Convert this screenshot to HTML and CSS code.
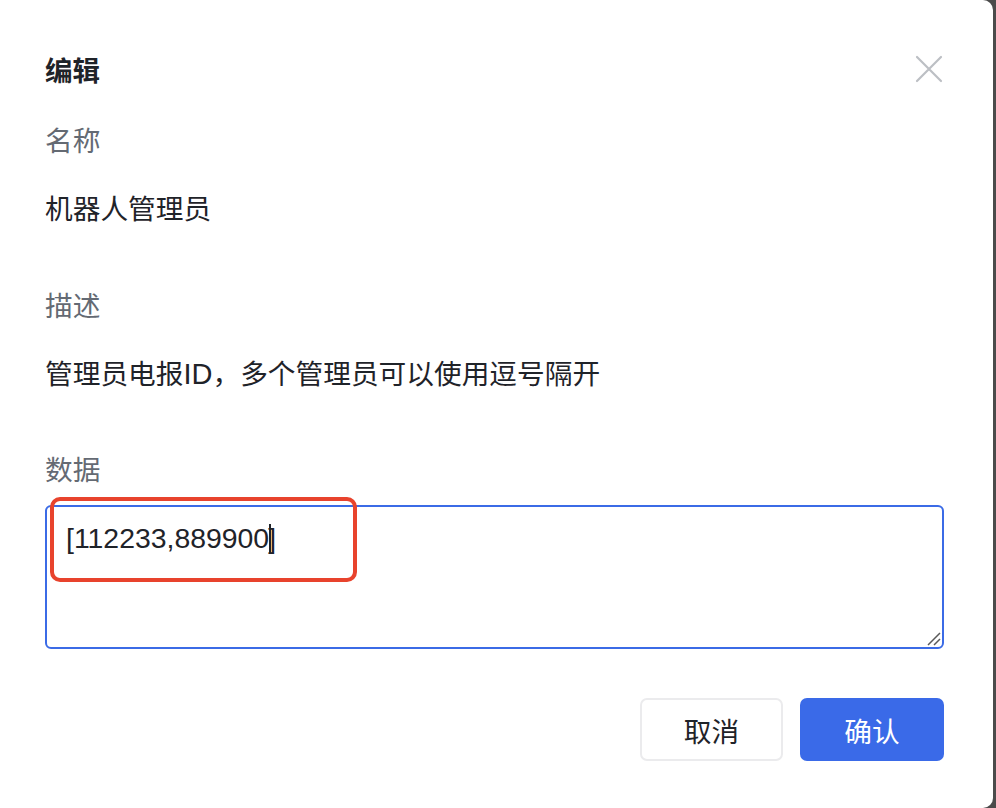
FILE: index.html
```html
<!DOCTYPE html>
<html lang="zh-CN">
<head>
<meta charset="utf-8">
<title>编辑</title>
<link rel="stylesheet" href="styles.css">
</head>
<body>
<div class="modal">
  <div class="header">
    <div class="title">编辑</div>
    <div class="close">
      <svg width="28" height="28" viewBox="0 0 28 28"><path d="M2 2 L26 26 M26 2 L2 26" stroke="#bcbfc4" stroke-width="2.2" stroke-linecap="round" fill="none"/></svg>
    </div>
  </div>
  <div class="field">
    <div class="label">名称</div>
    <div class="value">机器人管理员</div>
  </div>
  <div class="field">
    <div class="label">描述</div>
    <div class="value">管理员电报<span class="latin">ID</span>，多个管理员可以使用逗号隔开</div>
  </div>
  <div class="field last">
    <div class="label">数据</div>
    <div class="input-wrap">
      <div class="textarea"><span>[112233,889900</span><span class="caret"></span><span class="tail">]</span></div>
      <svg class="grip" width="14" height="14" viewBox="0 0 14 14"><path d="M1 13 L13 1 M7 13 L13 7" stroke="#5a5a5a" stroke-width="1.5" fill="none"/></svg>
      <div class="highlight"></div>
    </div>
  </div>
  <div class="footer">
    <button class="btn cancel">取消</button>
    <button class="btn ok">确认</button>
  </div>
</div>
</body>
</html>
```

FILE: styles.css
```css
html, body {
  margin: 0;
  padding: 0;
}
body {
  width: 996px;
  height: 808px;
  background: #4b4b4b;
  overflow: hidden;
  font-family: "Noto Sans CJK SC", sans-serif;
  font-size: 27.7px;
  color: #1f2329;
}
.modal {
  width: 993px;
  height: 808px;
  box-sizing: border-box;
  background: #fff;
  border-radius: 0 10px 10px 0;
  padding: 49px 49px 0 45px;
  display: flex;
  flex-direction: column;
}
.header {
  display: flex;
  justify-content: space-between;
  align-items: center;
  height: 40px;
}
.title {
  font-weight: 700;
  line-height: 40px;
  font-size: 27.5px;
}
.close {
  width: 28px;
  height: 28px;
  margin-right: 1px;
  display: flex;
}
.field {
  display: flex;
  flex-direction: column;
  margin-top: 30px;
}
.field + .field {
  margin-top: 57px;
}
.field.last {
  margin-top: 56px;
}
.label {
  color: #646a73;
  line-height: 40px;
  height: 40px;
}
.value {
  line-height: 40px;
  height: 40px;
  margin-top: 28px;
}
.latin {
  font-family: "Liberation Sans", sans-serif;
  font-size: 29px;
  line-height: 1;
}
.input-wrap {
  position: relative;
  margin-top: 17px;
}
.textarea {
  height: 144px;
  box-sizing: border-box;
  border: 2px solid #3b6be6;
  border-radius: 6px;
  padding: 11px 19px;
  line-height: 40px;
  display: flex;
  align-items: flex-start;
  font-family: "Liberation Sans", sans-serif;
  font-size: 28.4px;
}
.caret {
  width: 2px;
  height: 30px;
  background: #1f2329;
  margin-top: 6px;
}
.tail {
  margin-left: -3px;
}
.grip {
  position: absolute;
  right: 3px;
  bottom: 3px;
}
.highlight {
  position: absolute;
  left: 5px;
  top: -8px;
  width: 307px;
  height: 85px;
  box-sizing: border-box;
  border: 4px solid #e8432d;
  border-radius: 10px;
}
.footer {
  display: flex;
  justify-content: flex-end;
  gap: 17px;
  margin-top: 49px;
}
.btn {
  height: 63px;
  border-radius: 7px;
  font-family: "Noto Sans CJK SC", sans-serif;
  font-size: 27.7px;
  padding: 0;
  cursor: pointer;
}
.cancel {
  width: 143px;
  background: #fff;
  border: 2px solid #ebebed;
  color: #1f2329;
}
.ok {
  width: 144px;
  background: #3a6ae8;
  border: none;
  color: #fff;
}
```
